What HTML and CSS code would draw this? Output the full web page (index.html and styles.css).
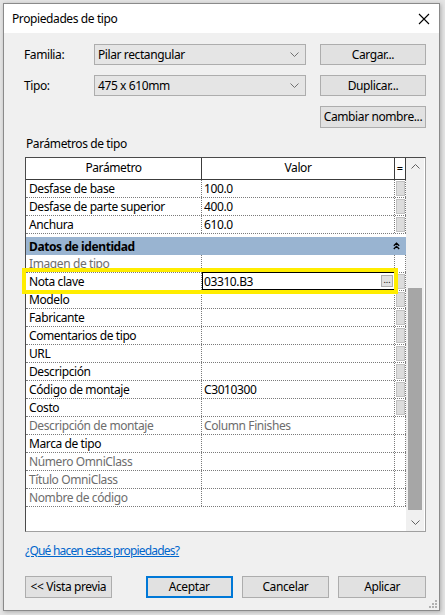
FILE: index.html
```html
<!DOCTYPE html>
<html lang="es">
<head>
<meta charset="utf-8">
<title>Propiedades de tipo</title>
<link rel="stylesheet" href="styles.css">
</head>
<body>
<div class="window">
  <div class="titlebar">
    <span class="title">Propiedades de tipo</span>
    <svg class="close" width="12" height="12" viewBox="0 0 12 12"><path d="M1 1 L11 11 M11 1 L1 11" stroke="#000" stroke-width="1.1" fill="none"/></svg>
  </div>
  <div class="body">
    <div class="top-grid">
      <span class="lbl">Familia:</span>
      <div class="combo"><span>Pilar rectangular</span><svg class="chev" width="9" height="5" viewBox="0 0 9 5"><path d="M0.5 0.5 L4.5 4.5 L8.5 0.5" stroke="#707070" fill="none"/></svg></div>
      <button class="btn">Cargar...</button>
      <span class="lbl">Tipo:</span>
      <div class="combo"><span>475 x 610mm</span><svg class="chev" width="9" height="5" viewBox="0 0 9 5"><path d="M0.5 0.5 L4.5 4.5 L8.5 0.5" stroke="#707070" fill="none"/></svg></div>
      <button class="btn">Duplicar...</button>
      <span></span><span></span>
      <button class="btn">Cambiar nombre...</button>
    </div>
    <div class="section-label">Parámetros de tipo</div>
    <div class="frame">
      <div class="grid">
        <div class="hrow">
          <div class="hc c1">Parámetro</div>
          <div class="hc c2">Valor</div>
          <div class="hc c3">=</div>
        </div>
        <div class="row"><div class="c1">Desfase de base</div><div class="c2">100.0</div><div class="c3"><span class="eq"></span></div></div>
        <div class="row"><div class="c1">Desfase de parte superior</div><div class="c2">400.0</div><div class="c3"><span class="eq"></span></div></div>
        <div class="row"><div class="c1">Anchura</div><div class="c2">610.0</div><div class="c3"><span class="eq"></span></div></div>
        <div class="group"><span>Datos de identidad</span><svg class="dchev" width="7" height="8" viewBox="0 0 7 8"><path d="M0.8 3.8 L3.5 1.2 L6.2 3.8 M0.8 7 L3.5 4.4 L6.2 7" stroke="#000" stroke-width="1.3" fill="none"/></svg></div>
        <div class="row dim"><div class="c1">Imagen de tipo</div><div class="c2"></div><div class="c3"></div></div>
        <div class="row"><div class="c1">Nota clave</div><div class="c2 editing"><span>03310.B3</span><span class="dots">...</span></div><div class="c3"><span class="eq"></span></div></div>
        <div class="row"><div class="c1">Modelo</div><div class="c2"></div><div class="c3"><span class="eq"></span></div></div>
        <div class="row"><div class="c1">Fabricante</div><div class="c2"></div><div class="c3"><span class="eq"></span></div></div>
        <div class="row"><div class="c1">Comentarios de tipo</div><div class="c2"></div><div class="c3"><span class="eq"></span></div></div>
        <div class="row"><div class="c1">URL</div><div class="c2"></div><div class="c3"><span class="eq"></span></div></div>
        <div class="row"><div class="c1">Descripción</div><div class="c2"></div><div class="c3"><span class="eq"></span></div></div>
        <div class="row"><div class="c1">Código de montaje</div><div class="c2">C3010300</div><div class="c3"><span class="eq"></span></div></div>
        <div class="row"><div class="c1">Costo</div><div class="c2"></div><div class="c3"><span class="eq"></span></div></div>
        <div class="row dim"><div class="c1">Descripción de montaje</div><div class="c2">Column Finishes</div><div class="c3"></div></div>
        <div class="row"><div class="c1">Marca de tipo</div><div class="c2"></div><div class="c3"></div></div>
        <div class="row dim"><div class="c1">Número OmniClass</div><div class="c2"></div><div class="c3"></div></div>
        <div class="row dim"><div class="c1">Título OmniClass</div><div class="c2"></div><div class="c3"></div></div>
        <div class="row dim"><div class="c1">Nombre de código</div><div class="c2"></div><div class="c3"></div></div>
      </div>
      <div class="scrollbar">
        <div class="sb-btn"><svg width="9" height="5" viewBox="0 0 9 5"><path d="M0.5 4.5 L4.5 0.5 L8.5 4.5" stroke="#606060" fill="none"/></svg></div>
        <div class="sb-track"><div class="sb-thumb"></div></div>
        <div class="sb-btn"><svg width="9" height="5" viewBox="0 0 9 5"><path d="M0.5 0.5 L4.5 4.5 L8.5 0.5" stroke="#606060" fill="none"/></svg></div>
      </div>
      <div class="highlight"></div>
    </div>
    <a class="help" href="#">¿Qué hacen estas propiedades?</a>
    <div class="buttons">
      <button class="btn b-prev">&lt;&lt; Vista previa</button>
      <button class="btn b-ok">Aceptar</button>
      <button class="btn b-cancel">Cancelar</button>
      <button class="btn b-apply">Aplicar</button>
    </div>
  </div>
  <svg class="grip" width="10" height="10" viewBox="0 0 10 10">
    <rect x="7" y="1" width="2" height="2" fill="#b0b0b0"/>
    <rect x="4" y="4" width="2" height="2" fill="#b0b0b0"/>
    <rect x="7" y="4" width="2" height="2" fill="#b0b0b0"/>
    <rect x="1" y="7" width="2" height="2" fill="#b0b0b0"/>
    <rect x="4" y="7" width="2" height="2" fill="#b0b0b0"/>
    <rect x="7" y="7" width="2" height="2" fill="#b0b0b0"/>
  </svg>
</div>
</body>
</html>
```

FILE: styles.css
```css
* { box-sizing: border-box; }

html, body {
  margin: 0;
  padding: 0;
}

body {
  background: #e4e4e4;
  width: 445px;
  height: 615px;
  overflow: hidden;
  font-family: "Noto Sans", "Open Sans", sans-serif;
  font-size: 12px;
  letter-spacing: -0.4px;
  color: #000;
}

.window {
  position: relative;
  margin: 3px 0 0 3px;
  width: 437px;
  height: 608px;
  border: 1px solid #8a8a8a;
  background: #f0f0f0;
  box-shadow: 1px 1px 4px rgba(0,0,0,0.25);
}

.titlebar {
  height: 29px;
  background: #fff;
  display: flex;
  align-items: center;
  justify-content: space-between;
  padding: 0 9px 0 8px;
}

.title {
  font-size: 12px;
  line-height: 16px;
}

.close { display: block; }

.body {
  padding: 11px 13px 0 21px;
}

.top-grid {
  display: grid;
  grid-template-columns: 69px 212px 120px;
  grid-template-rows: 21px 21px 22px;
  row-gap: 10px;
  align-items: stretch;
}

.top-grid .btn {
  height: auto;
  margin-left: 14px;
}

.lbl {
  display: flex;
  align-items: center;
  margin-left: -1px;
  line-height: 16px;
}

.combo {
  display: flex;
  align-items: center;
  justify-content: space-between;
  border: 1px solid #adadad;
  background: #e5e5e5;
  padding: 0 6px 0 3px;
  line-height: 16px;
}

.chev { display: block; }

.btn {
  font-family: inherit;
  font-size: 12px;
  letter-spacing: -0.4px;
  color: #000;
  background: #e1e1e1;
  border: 1px solid #adadad;
  padding: 0;
  margin: 0;
  line-height: 16px;
  height: 22px;
  white-space: nowrap;
}

.section-label {
  margin-top: 8px;
  line-height: 16px;
  padding-left: 1px;
}

.frame {
  position: relative;
  margin-top: 5px;
  width: 401px;
  height: 375px;
  border: 1px solid;
  border-color: #4a4a4a #a0a0a0 #a0a0a0 #4a4a4a;
  background: #fff;
  display: flex;
}

.grid {
  width: 380px;
  display: flex;
  flex-direction: column;
}

.hrow {
  display: grid;
  grid-template-columns: 176px 193px 11px;
  height: 22px;
  border-bottom: 1px solid #3c3c3c;
}

.hc {
  text-align: center;
  line-height: 20px;
}

.hrow .c1, .hrow .c2 { border-right: 1px solid #3c3c3c; }
.hrow .c3 { border-right: 1px solid #3c3c3c; font-size: 11px; letter-spacing: 0; }

.row {
  display: grid;
  grid-template-columns: 176px 193px 11px;
  height: 18px;
  border-bottom: 1px dotted #7a7a7a;
}

.row > div {
  line-height: 17px;
  white-space: nowrap;
  overflow: hidden;
}

.row .c1 { padding-left: 3px; border-right: 1px dotted #7a7a7a; }
.row .c2 { padding-left: 2px; border-right: 1px dotted #7a7a7a; }
.row .c3 { border-right: 1px dotted #7a7a7a; position: relative; }

.row.dim > div { color: #6d6d6d; }

.eq {
  display: block;
  margin: 1px 0 0 1px;
  width: 9px;
  height: 15px;
  background: #dcdcdc;
  border: 1px solid #c2c2c2;
}

.c2.editing {
  display: flex;
  justify-content: space-between;
  align-items: center;
  border: 1px solid #000;
  margin-top: -1px;
  height: 18px;
  padding-left: 1px;
  padding-right: 1px;
}

.dots {
  width: 12px;
  height: 12px;
  border: 1px solid #adadad;
  background: #e1e1e1;
  font-size: 9px;
  letter-spacing: 0;
  line-height: 7px;
  text-align: center;
  color: #000;
}

.group {
  margin-top: 3px;
  height: 18px;
  background: #99b4d1;
  display: flex;
  align-items: center;
  justify-content: space-between;
  padding: 0 6px 0 3px;
  font-weight: bold;
  line-height: 17px;
}

.dchev { display: block; }

.scrollbar {
  width: 18px;
  background: #f0f0f0;
  display: flex;
  flex-direction: column;
}

.sb-btn {
  height: 17px;
  display: flex;
  align-items: center;
  justify-content: center;
}

.sb-btn svg { display: block; }

.sb-track {
  flex: 1;
  padding: 0 2px;
}

.sb-thumb {
  margin-top: 113px;
  height: 222px;
  background: #a6a6a6;
}

.highlight {
  position: absolute;
  left: -4px;
  top: 110px;
  width: 376px;
  height: 26px;
  border: 4px solid #ffed00;
  pointer-events: none;
}

.help {
  display: block;
  margin-top: 11px;
  line-height: 16px;
  color: #0066cc;
  letter-spacing: -0.8px;
  text-decoration: underline;
  width: max-content;
}

.buttons {
  display: flex;
  margin-top: 17px;
}

.b-prev { width: 87px; }
.b-ok { width: 87px; margin-left: 34px; border: 2px solid #0078d7; }
.b-cancel { width: 88px; margin-left: 9px; }
.b-apply { width: 88px; margin-left: 9px; }

.grip {
  position: absolute;
  right: 1px;
  bottom: 1px;
  display: block;
}
```
